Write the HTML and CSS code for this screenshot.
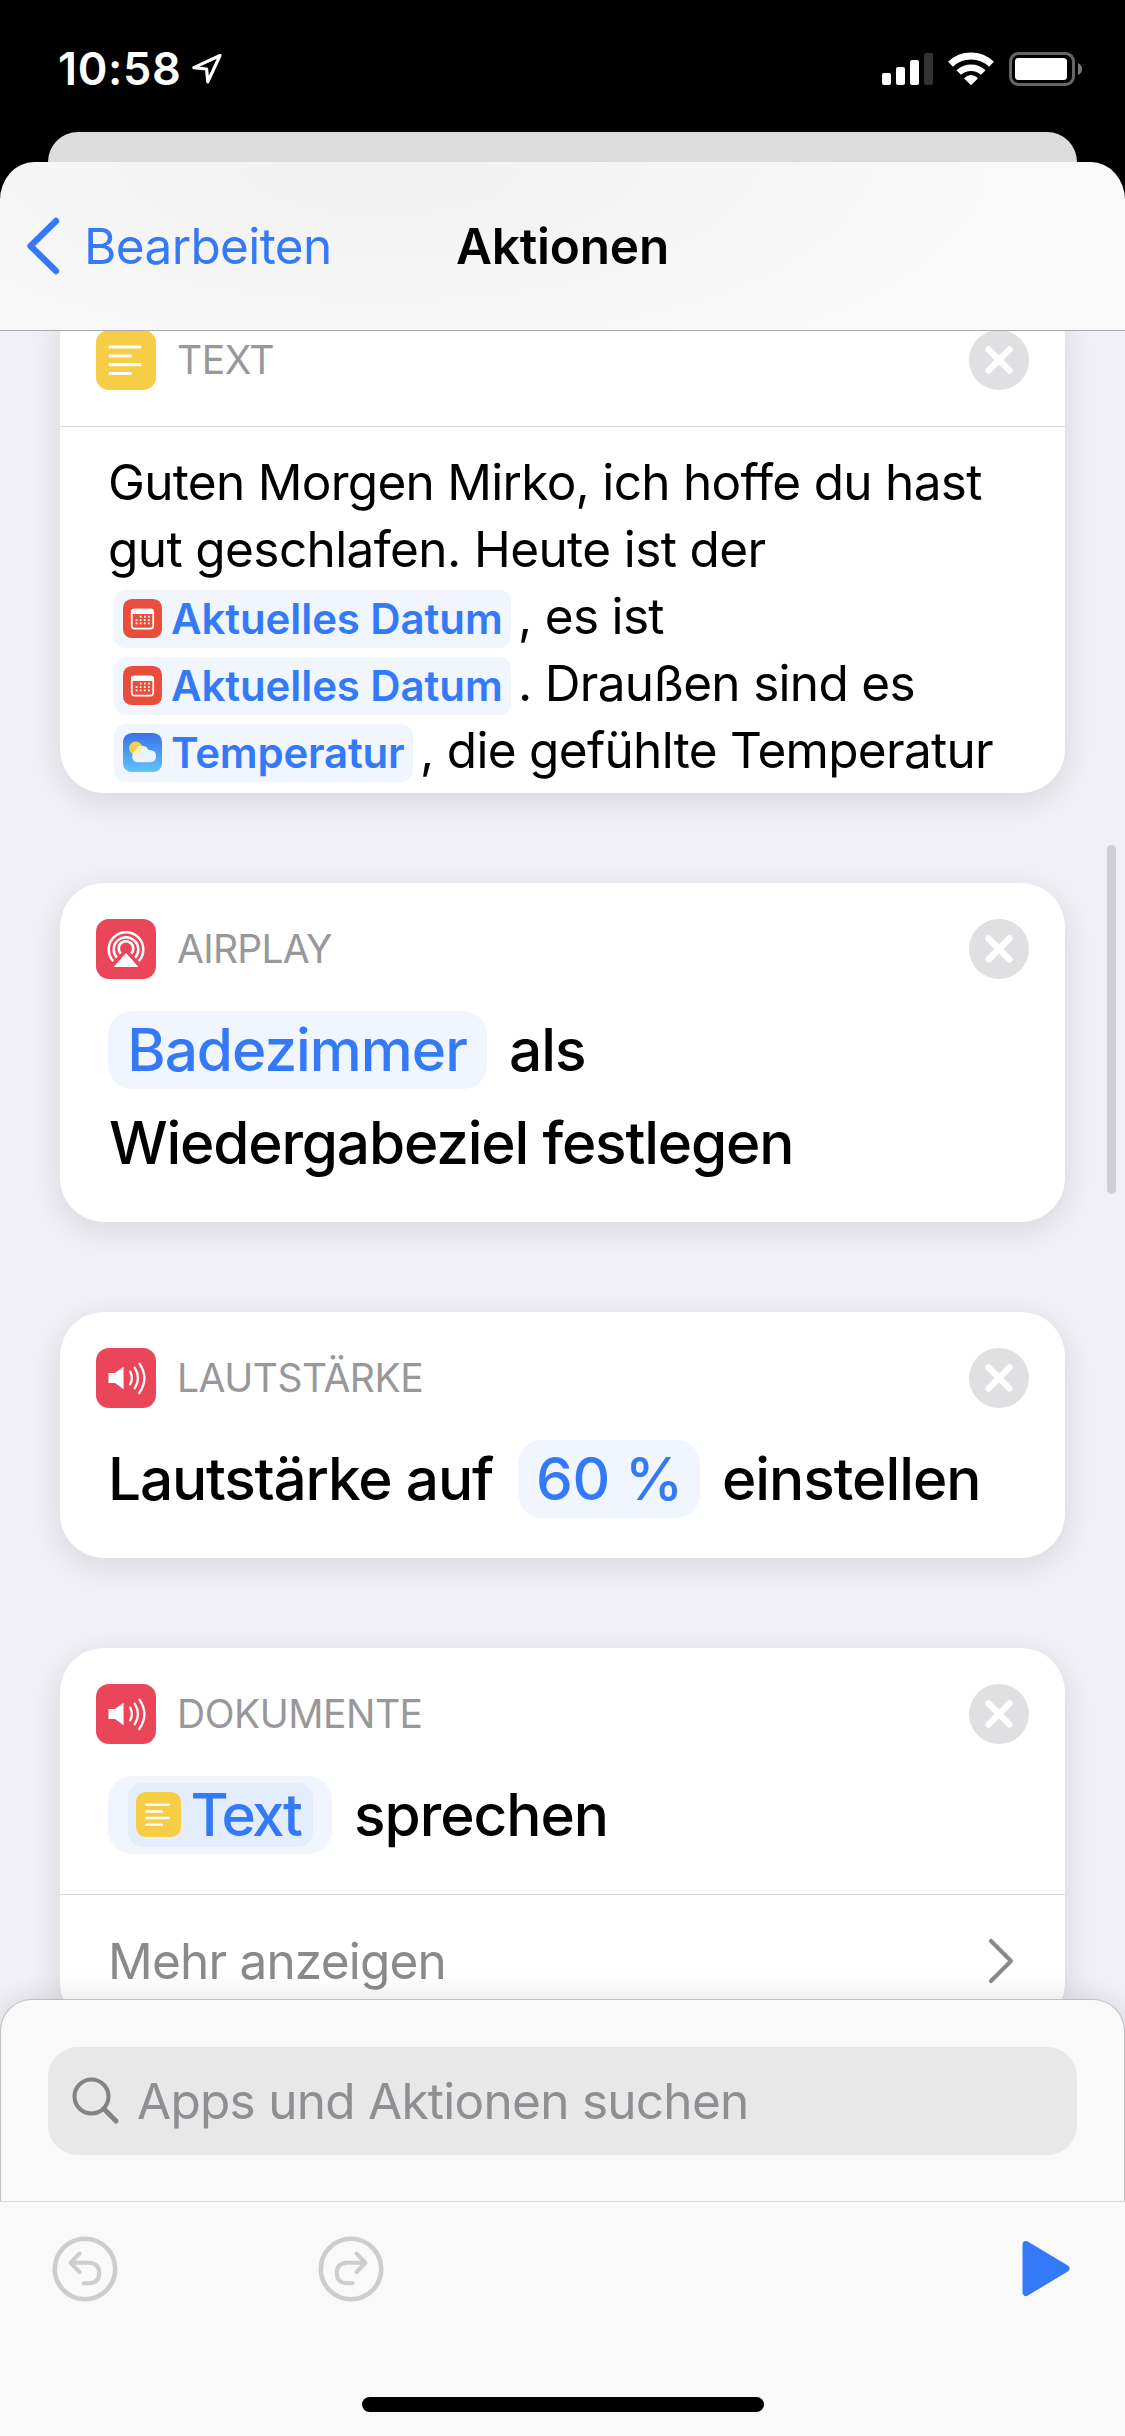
FILE: index.html
```html
<!DOCTYPE html>
<html lang="de">
<head>
<meta charset="utf-8">
<title>Aktionen</title>
<link rel="stylesheet" href="styles.css">
</head>
<body>
<svg class="sprite" aria-hidden="true">
  <symbol id="close" viewBox="0 0 60 60">
    <circle cx="30" cy="30" r="30" fill="#e0e0e2"/>
    <path d="M19.5 19.5L40.5 40.5M40.5 19.5L19.5 40.5" stroke="#fff" stroke-width="6.4" stroke-linecap="round"/>
  </symbol>
  <symbol id="text" viewBox="0 0 60 60">
    <rect width="60" height="60" rx="13" fill="#f7cd46"/>
    <path d="M14 17H44M14 26H34.5M14 34.7H44M14 43.5H34.5" stroke="#fff" stroke-width="3.2" stroke-linecap="round"/>
  </symbol>
  <symbol id="speaker" viewBox="0 0 60 60">
    <rect width="60" height="60" rx="13" fill="#eb455a"/>
    <path d="M12.5 25H19L27.6 18.8V41.2L19 35H12.5Z" fill="#fff"/>
    <path d="M34.2 23.8Q37.6 30 34.2 36.2M38.8 19.8Q45.2 30 38.8 40.2M43.6 15.8Q53.4 30.5 43.2 45" fill="none" stroke="#fff" stroke-width="2.3" stroke-linecap="round"/>
  </symbol>
  <symbol id="calendar" viewBox="0 0 40 40">
    <rect width="40" height="40" rx="9" fill="#e94e3d"/>
    <rect x="9" y="11" width="22" height="19.5" rx="3" fill="none" stroke="#fff" stroke-width="1.8"/>
    <path d="M8.2 15.5V13Q8.2 10 11 10H29Q31.800 10 31.800 13V15.500Z" fill="#fff"/>
    <path d="M17.300 18.200H28M13 21.600H28M13 25H28" stroke="#fff" stroke-width="1.800" stroke-dasharray="1.800 2.400"/>
  </symbol>
</svg>

<div class="screen">
  <div class="status">
    <span class="clock">10:58</span>
    <svg class="location" width="32" height="34" viewBox="0 0 32 34"><path d="M29 3.500L2.800 15.600L15.600 17L16.800 29.800Z" fill="none" stroke="#fff" stroke-width="3.200" stroke-linejoin="round"/></svg>
    <svg class="signals" width="202" height="36" viewBox="881 51 202 36">
      <g fill="#fff"><rect x="882" y="73" width="9" height="12" rx="2"/><rect x="896" y="67" width="9" height="18" rx="2"/><rect x="910" y="60" width="9" height="25" rx="2"/></g>
      <rect x="924" y="53" width="9" height="32" rx="2" fill="#333"/>
      <g fill="none" stroke="#fff"><path d="M950.500 64.200A29.500 29.500 0 0 1 991.500 64.200" stroke-width="7"/><path d="M958.700 72.500A18 18 0 0 1 983.300 72.500" stroke-width="6.500"/></g>
      <path d="M964 78.300Q971 71.600 978 78.300L971 85.300Z" fill="#fff"/>
      <rect x="1010.500" y="53.500" width="63" height="31" rx="8" fill="none" stroke="#666" stroke-width="3"/>
      <rect x="1015" y="58" width="52" height="22" rx="3.500" fill="#fff"/>
      <path d="M1078 63Q1082 65 1082 69T1078 75Z" fill="#7a7a7a"/>
    </svg>
  </div>
  <div class="sheet-behind"></div>

  <header class="navbar">
    <div class="back">
      <svg width="36" height="60" viewBox="0 0 36 60"><path d="M32 5L6.500 30L32 55" fill="none" stroke="#347af6" stroke-width="6.400" stroke-linecap="round" stroke-linejoin="round"/></svg>
      <span>Bearbeiten</span>
    </div>
    <h1 class="title">Aktionen</h1>
  </header>

  <main class="actions">
    <section class="card card-first">
      <div class="card-head"><svg class="app-icon"><use href="#text"/></svg><span class="app-name">TEXT</span><svg class="close"><use href="#close"/></svg></div>
      <div class="copy">
        <div class="line lead">Guten Morgen Mirko, ich hoffe du hast</div>
        <div class="line second">gut geschlafen. Heute ist der</div>
        <div class="line"><span class="tag date"><svg class="tag-icon"><use href="#calendar"/></svg>Aktuelles Datum</span><span>, es ist</span></div>
        <div class="line"><span class="tag date"><svg class="tag-icon"><use href="#calendar"/></svg>Aktuelles Datum</span><span>. Draußen sind es</span></div>
        <div class="line"><span class="tag weather"><svg class="tag-icon" viewBox="0 0 40 40">
          <defs><linearGradient id="sky" x1="0" y1="0" x2="0" y2="1"><stop offset="0" stop-color="#3a70e8"/><stop offset="1" stop-color="#5fc4f8"/></linearGradient></defs>
          <rect width="40" height="40" rx="9" fill="url(#sky)"/><circle cx="13" cy="15.500" r="6.800" fill="#f7d247"/>
          <path d="M15 30Q9.500 29.500 9.500 24.500Q9.500 20 12.500 18.500Q15 12.500 20 13Q25 13.500 26 17.500Q34 17 34 24Q33.500 29.500 28 30Z" fill="#f3f6fc" fill-opacity=".94"/>
          <path d="M12.500 22.200Q10.500 19.500 13.500 16.700Q15.700 13.200 19.400 13.200Q20.500 20.500 12.500 22.200Z" fill="#faeeb0"/>
        </svg>Temperatur</span><span>, die gefühlte Temperatur</span></div>
      </div>
    </section>

    <section class="card">
      <div class="card-head"><svg class="app-icon" viewBox="0 0 60 60">
        <rect width="60" height="60" rx="13" fill="#eb455a"/>
        <g fill="none" stroke="#fff" stroke-width="2.500"><path d="M17.300 42.200A17.300 17.300 0 1 1 42.700 42.200"/><path d="M20.800 38.600A12.300 12.300 0 1 1 39.200 38.600"/><path d="M24.800 34.600A7.300 7.300 0 1 1 35.200 34.600" stroke-width="2.700"/></g>
        <path d="M30 34.500L41.500 47.500H18.500Z" fill="#fff" stroke="#fff" stroke-width="1" stroke-linejoin="round"/>
      </svg><span class="app-name airplay">AIRPLAY</span><svg class="close"><use href="#close"/></svg></div>
      <div class="summary">
        <div class="row"><span class="token room">Badezimmer</span><span>als</span></div>
        <div class="row long">Wiedergabeziel festlegen</div>
      </div>
    </section>

    <section class="card">
      <div class="card-head"><svg class="app-icon"><use href="#speaker"/></svg><span class="app-name">LAUTSTÄRKE</span><svg class="close"><use href="#close"/></svg></div>
      <div class="summary">
        <div class="row"><span class="long volume">Lautstärke auf</span><span class="token level">60 %</span><span>einstellen</span></div>
      </div>
    </section>

    <section class="card">
      <div class="card-head"><svg class="app-icon"><use href="#speaker"/></svg><span class="app-name">DOKUMENTE</span><svg class="close"><use href="#close"/></svg></div>
      <div class="summary">
        <div class="row"><span class="token variable"><span class="inner"><svg class="inner-icon"><use href="#text"/></svg>Text</span></span><span>sprechen</span></div>
      </div>
      <div class="more"><span>Mehr anzeigen</span>
        <svg width="28" height="48" viewBox="0 0 28 48"><path d="M4 4L24 24L4 44" fill="none" stroke="#8a8a8d" stroke-width="4.200" stroke-linecap="round" stroke-linejoin="round"/></svg>
      </div>
    </section>
    <div class="scrollbar"></div>
  </main>

  <div class="search-panel">
    <div class="search">
      <svg width="50" height="50" viewBox="0 0 50 50"><circle cx="20.500" cy="20.500" r="17" fill="none" stroke="#828287" stroke-width="4"/><path d="M33 33L45 45" stroke="#828287" stroke-width="5" stroke-linecap="round"/></svg>
      <span>Apps und Aktionen suchen</span>
    </div>
  </div>

  <footer class="toolbar">
    <div class="tools">
      <svg width="66" height="66" viewBox="0 0 66 66"><g id="undo" fill="none" stroke="#cdcdcd" stroke-linecap="round" stroke-linejoin="round"><circle cx="33" cy="33" r="30.200" stroke-width="4.600"/><path d="M27.500 17.500L18.500 26.800L27.500 36M19 26.800H37Q47 27.500 47.300 36.500Q47.300 47 37 47.300H31.500" stroke-width="4"/></g></svg>
      <svg class="redo" width="66" height="66" viewBox="0 0 66 66"><use href="#undo" transform="translate(66 0) scale(-1 1)"/></svg>
      <svg class="play" width="50" height="60" viewBox="0 0 50 60"><path d="M5 5.500L45 29.500L5 53.500Z" fill="#347af6" stroke="#347af6" stroke-width="7" stroke-linejoin="round"/></svg>
    </div>
    <div class="home"></div>
  </footer>
</div>
</body>
</html>
```
FILE: styles.css
```css
* { box-sizing: border-box; }

body {
  margin: 0;
  background: #000;
  font-family: Inter, "Liberation Sans", sans-serif;
  color: #000;
}

svg { display: block; flex: none; }
.sprite { position: absolute; width: 0; height: 0; }

.screen {
  width: 1125px;
  height: 2436px;
  overflow: hidden;
  display: flex;
  flex-direction: column;
  background: #000;
}

/* Status bar */
.status {
  flex: none;
  height: 132px;
  display: flex;
  align-items: flex-start;
  padding: 51px 42px 0 58px;
}
.clock {
  margin-top: -1px;
  font-size: 45px;
  line-height: 38px;
  font-weight: 600;
  letter-spacing: .66px;
  color: #fff;
}
.location { margin: 1px 0 0 10px; }
.signals { margin-left: auto; }

.sheet-behind {
  flex: none;
  height: 30px;
  margin: 0 48px;
  border-radius: 30px 30px 0 0;
  background: #dcdcdc;
}

/* Navigation bar */
.navbar {
  flex: none;
  height: 169px;
  display: grid;
  grid-template-columns: 1fr auto 1fr;
  align-items: center;
  border-bottom: 1px solid #acacae;
  border-radius: 34px 34px 0 0 / 38px 38px 0 0;
  background: radial-gradient(ellipse 620px 230px at 380px 0, #f1f1f1, #f9f9f9);
  font-size: 49.5px;
  line-height: 60px;
}
.back {
  display: flex;
  align-items: center;
  gap: 24px;
  padding-left: 24px;
  letter-spacing: -.63px;
  color: #347af6;
}
.title {
  margin: 0;
  font-size: inherit;
  font-weight: 600;
  letter-spacing: -.19px;
}

/* Action list */
.actions {
  position: relative;
  flex: none;
  height: 1709px;
  overflow: hidden;
  display: flex;
  flex-direction: column;
  gap: 90px;
  padding: 0 60px;
  background: #f1f0f6;
}
.card {
  flex: none;
  border-radius: 44px;
  background: #fff;
  box-shadow: 0 8px 36px rgba(0, 0, 0, .11);
}
.card-first { margin-top: -37px; }
.card-head {
  height: 96px;
  display: flex;
  align-items: center;
  padding: 36px 36px 0;
}
.card-first .card-head {
  height: 132px;
  padding-bottom: 36px;
}
.app-icon, .close { width: 60px; height: 60px; }
.close { margin-left: auto; }
.app-name {
  margin-left: 21px;
  font-size: 39px;
  line-height: 60px;
  letter-spacing: -.48px;
  color: #98989a;
}
.airplay { letter-spacing: -.75px; }

.copy {
  padding: 22px 0 9px 48px;
  border-top: 1px solid #d9d9db;
  font-size: 49.5px;
  letter-spacing: -.7px;
}
.line {
  height: 67px;
  line-height: 67px;
  display: flex;
  align-items: center;
  white-space: pre;
}
.lead { letter-spacing: -.71px; }
.second { letter-spacing: -.6px; }
.tag {
  height: 58px;
  margin: 4px 7px 0 6px;
  padding-left: 9px;
  display: flex;
  align-items: center;
  gap: 9px;
  border-radius: 12px;
  background: #f0f5fe;
  font-size: 42px;
  line-height: 58px;
  font-weight: 600;
  letter-spacing: -.1px;
  color: #347af6;
}
.date { width: 397px; }
.weather { width: 299px; letter-spacing: -.23px; }
.tag-icon { width: 39px; height: 39px; }

.summary {
  padding: 24px 0 33px 48px;
  font-size: 58.5px;
  font-weight: 500;
  letter-spacing: -1px;
}
.row {
  height: 93px;
  line-height: 93px;
  display: flex;
  align-items: center;
  gap: 22px;
  white-space: pre;
}
.long { letter-spacing: -1.17px; }
.row.long { padding-left: 1px; }
.volume { margin-right: 3px; }
.token {
  height: 78px;
  line-height: 78px;
  display: flex;
  align-items: center;
  justify-content: center;
  border-radius: 24px;
  background: #f0f5fe;
  color: #347af6;
}
.room { width: 379px; padding-right: 1px; }
.level { width: 182px; padding-left: 1px; letter-spacing: -.4px; }
.variable { width: 224px; letter-spacing: -2.6px; }
.inner {
  width: 185px;
  height: 64px;
  line-height: 64px;
  display: flex;
  align-items: center;
  gap: 10px;
  padding-left: 8px;
  border-radius: 15px;
  background: #e3edfc;
}
.inner-icon { width: 45px; height: 45px; }

.more {
  height: 133px;
  display: flex;
  align-items: center;
  justify-content: space-between;
  padding: 0 50px 0 48px;
  border-top: 1px solid #d9d9db;
  font-size: 49.5px;
  letter-spacing: -.8px;
  color: #8a8a8d;
}

.scrollbar {
  position: absolute;
  top: 514px;
  right: 9px;
  width: 9px;
  height: 349px;
  border-radius: 5px;
  background: #cfced4;
}

/* Search panel */
.search-panel {
  position: relative;
  flex: none;
  height: 202px;
  margin-top: -41px;
  padding: 47px 47px 0;
  border: 1px solid #c0c0c3;
  border-bottom: 0;
  border-radius: 32px 32px 0 0;
  background: #f9f9f9;
  box-shadow: 0 0 30px rgba(0, 0, 0, .13);
}
.search {
  height: 108px;
  display: flex;
  align-items: center;
  gap: 16px;
  padding-left: 23px;
  border-radius: 30px;
  background: #e8e8e8;
  font-size: 49.5px;
  line-height: 110px;
  letter-spacing: -.73px;
  color: #8e8e93;
}

/* Bottom toolbar */
.toolbar {
  position: relative;
  flex: none;
  height: 235px;
  padding: 34px 54px 24px 52px;
  display: flex;
  flex-direction: column;
  justify-content: space-between;
  border-top: 1px solid #d9d9db;
  background: #f9f9f9;
}
.tools { display: flex; align-items: center; }
.redo { margin-left: 200px; }
.play { margin-left: auto; }
.home {
  width: 402px;
  height: 15px;
  margin-left: 310px;
  border-radius: 8px;
  background: #000;
}
```
